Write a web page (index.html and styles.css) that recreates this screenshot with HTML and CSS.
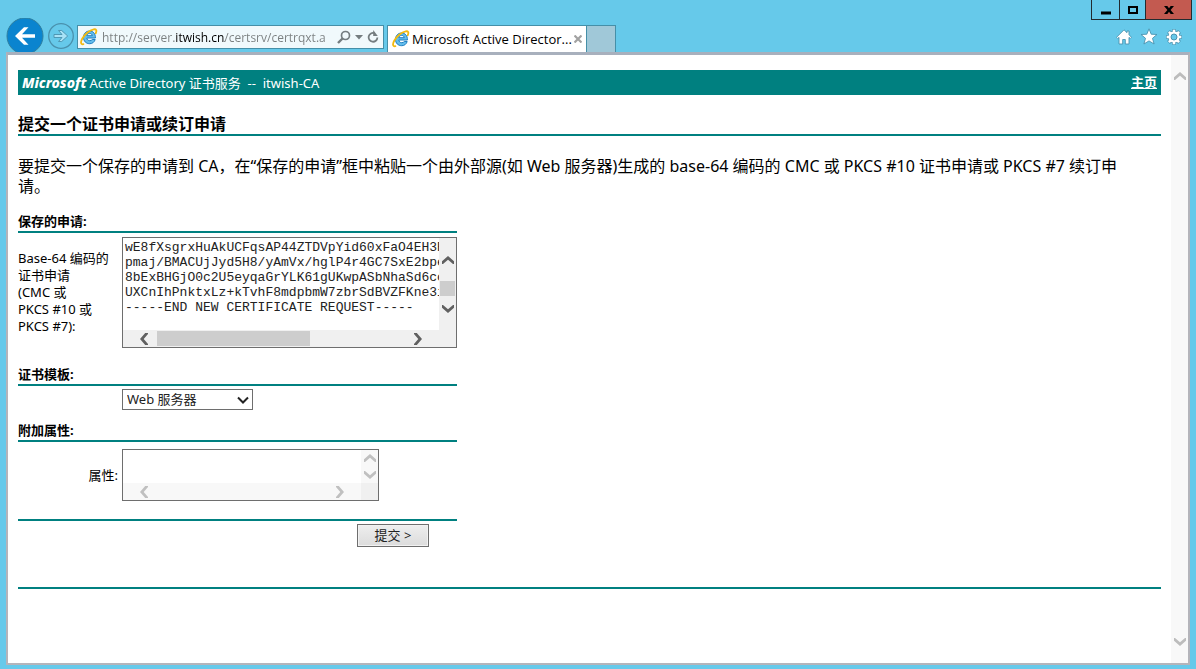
FILE: index.html
```html
<!DOCTYPE html>
<html lang="zh-CN">
<head>
<meta charset="utf-8">
<title>Microsoft Active Directory 证书服务</title>
<link rel="stylesheet" href="styles.css">
</head>
<body>
<svg class="defs" width="0" height="0" aria-hidden="true">
  <symbol id="ie" viewBox="0 0 18 18">
    <path d="M15.400 10H6.800c.2 1.700 1.400 2.700 3 2.700 1.100 0 1.900-.4 2.400-1.200h3c-.8 2.600-2.800 4.200-5.500 4.200-3.700 0-6.200-2.600-6.200-6.300S6 3 9.600 3c3.700 0 6 2.800 5.800 7zM6.800 7.700h5.500c-.2-1.400-1.200-2.300-2.700-2.300-1.500 0-2.500.9-2.800 2.300z" fill="#63bdec" stroke="#1f7fc2" stroke-width="1"/>
    <path d="M3.400 16.200C.6 16.800.4 14 2.200 10.700 4.500 6.500 9.500 2 13.700 1.300c2.700-.4 3.300 1.300 2 4" fill="none" stroke="#f2b90f" stroke-width="1.800" stroke-linecap="round"/>
  </symbol>
  <symbol id="chev" viewBox="0 0 12 8"><path d="M0 8V5.200L6 0l6 5.200V8l-1 0L6 3.700 1 8z" fill="currentColor"/></symbol>
</svg>

<header class="chrome">
  <nav class="nav">
    <button class="back" aria-label="Back"><svg width="38" height="34" viewBox="0 0 38 34"><circle cx="19" cy="18" r="18" fill="#0a84cf" stroke="#2f7f9f"/><path d="M9 18 18 9.300h4.500L16 16.200h13v3.600H16l6.500 6.900H18z" fill="#fff"/></svg></button>
    <button class="forward" aria-label="Forward"><svg width="26" height="26" viewBox="0 0 26 26"><circle cx="13" cy="13" r="12.300" fill="none" stroke="#4a91ad" stroke-width="1.300"/><path d="M6 11.500h8L10.500 7.500h3.200l6 5.500-6 5.500h-3.200l3.500-4H6z" fill="#a8e2f6" stroke="#4a91ad" stroke-width=".9"/></svg></button>
    <div class="address">
      <svg width="18" height="18"><use href="#ie"/></svg>
      <input type="text" aria-label="Address" value="http://server.itwish.cn/certsrv/certrqxt.a">
      <button aria-label="Search"><svg width="14" height="14" viewBox="0 0 14 14"><circle cx="8.500" cy="5.500" r="4" fill="none" stroke="#747d80" stroke-width="1.700"/><path d="M5.500 8.500 1 13" stroke="#747d80" stroke-width="2.400"/></svg></button>
      <button aria-label="History"><svg width="8" height="5"><path d="M0 0h8L4 4.500z" fill="#747d80"/></svg></button>
      <button aria-label="Refresh"><svg width="12" height="14" viewBox="0 0 12 14"><path d="M7.500 3.200A4.400 4.400 0 1 0 10.400 7.500" fill="none" stroke="#747d80" stroke-width="1.800"/><path d="M6.200 0v6h4.600z" fill="#747d80"/></svg></button>
    </div>
  </nav>
  <div class="tabs">
    <div class="tab"><svg width="18" height="18"><use href="#ie"/></svg><span>Microsoft Active Director...</span><button aria-label="Close tab"><svg width="8" height="8"><path d="m.5.5 7 7m0-7-7 7" stroke="#a2a2a2" stroke-width="2.200"/></svg></button></div>
    <button class="newtab" aria-label="New tab"></button>
  </div>
  <div class="right">
    <div class="window-buttons">
      <button class="min" aria-label="Minimize"><svg width="10" height="10"><path d="M0 6.500h10v3H0z"/></svg></button>
      <button class="max" aria-label="Maximize"><svg width="10" height="8"><path d="M0 0h10v8H0zM2 2v4h6V2z" fill-rule="evenodd"/></svg></button>
      <button class="close" aria-label="Close"><svg width="10" height="8"><path d="M0 0h3.300L5 2.300 6.700 0H10L6.600 4 10 8H6.700L5 5.700 3.300 8H0l3.400-4z"/></svg></button>
    </div>
    <div class="tools">
      <button aria-label="Home"><svg width="16" height="16" viewBox="0 0 16 16"><path d="M8 .8.500 8.300l1.200 1.200L3 8.400V15h3.700v-4.500h2.600V15H13V8.400l1.300 1.100 1.200-1.200-2.500-2.600V2h-2v1.700z" fill="#fff" stroke="#4a93b0" stroke-width=".9"/></svg></button>
      <button aria-label="Favorites"><svg width="18" height="17" viewBox="0 0 18 17"><path d="m9 .8 2.200 5.400 5.800.3-4.500 3.800 1.600 5.700L9 12.900 3.900 16l1.600-5.700L1 6.500l5.800-.3z" fill="#fff" stroke="#4a93b0" stroke-width=".9"/></svg></button>
      <button aria-label="Tools"><svg width="16" height="16" viewBox="0 0 16 16"><g stroke="#4a93b0" stroke-width="4"><path d="M8 .2v15.600M.2 8h15.600M2.500 2.500l11 11m0-11-11 11"/></g><circle cx="8" cy="8" r="6" fill="#fff" stroke="#4a93b0"/><path d="M8 .7v14.600M.7 8h14.600M2.900 2.900l10.200 10.200m0-10.200L2.900 13.100" stroke="#fff" stroke-width="2.600"/><circle cx="8" cy="8" r="3" fill="#66c9ea" stroke="#4a93b0"/></svg></button>
    </div>
  </div>
</header>

<div class="frame">
  <main class="page">
    <div class="banner">
      <div><b class="brand">Microsoft</b>Active Directory 证书服务 &nbsp;--&nbsp; itwish-CA</div>
      <a href="#">主页</a>
    </div>
    <h1>提交一个证书申请或续订申请</h1>
    <p class="intro">要提交一个保存的申请到 CA，在“保存的申请”框中粘贴一个由外部源(如 Web 服务器)生成的 base-64 编码的 CMC 或 PKCS #10 证书申请或 PKCS #7 续订申请。</p>

    <form>
      <h2>保存的申请:</h2>
      <div class="row request">
        <label for="req">Base-64 编码的<br>证书申请<br>(CMC 或<br>PKCS #10 或<br>PKCS #7):</label>
        <div class="area">
          <textarea id="req" wrap="off" spellcheck="false">wE8fXsgrxHuAkUCFqsAP44ZTDVpYid60xFaO4EH3R
pmaj/BMACUjJyd5H8/yAmVx/hglP4r4GC7SxE2bpe
8bExBHGjO0c2U5eyqaGrYLK61gUKwpASbNhaSd6co
UXCnIhPnktxLz+kTvhF8mdpbmW7zbrSdBVZFKne3i
-----END NEW CERTIFICATE REQUEST-----
</textarea>
          <div class="vbar"><svg class="up" width="12" height="8"><use href="#chev"/></svg><i class="thumb"></i><svg class="down" width="12" height="8"><use href="#chev"/></svg></div>
          <div class="hbar"><svg class="left" width="12" height="8"><use href="#chev"/></svg><i class="thumb"></i><svg class="end" width="12" height="8"><use href="#chev"/></svg></div>
        </div>
      </div>

      <h2>证书模板:</h2>
      <div class="row template">
        <span></span>
        <div class="select"><select aria-label="证书模板"><option>Web 服务器</option></select><svg width="12" height="8" viewBox="0 0 12 8"><path d="m1 1.500 5 5 5-5" fill="none" stroke="#222" stroke-width="2"/></svg></div>
      </div>

      <h2>附加属性:</h2>
      <div class="row attributes">
        <label for="attr">属性:</label>
        <div class="area small">
          <textarea id="attr" wrap="off"></textarea>
          <div class="vbar"><svg class="up" width="12" height="8"><use href="#chev"/></svg><svg class="down" width="12" height="8"><use href="#chev"/></svg></div>
          <div class="hbar"><svg class="left" width="12" height="8"><use href="#chev"/></svg><svg class="end" width="12" height="8"><use href="#chev"/></svg></div>
        </div>
      </div>
      <div class="submit"><button type="button">提交 &gt;</button></div>
    </form>
    <hr>
  </main>
  <div class="page-scroll"><svg class="up" width="12" height="8"><use href="#chev"/></svg><svg class="down" width="12" height="8"><use href="#chev"/></svg></div>
</div>
</body>
</html>
```
FILE: styles.css
```css
* { box-sizing: border-box; }
body {
  margin: 0;
  height: 100vh;
  padding: 0 6px 4px;
  display: flex;
  flex-direction: column;
  background: #66c9ea;
  color: #000;
  font: 13px/17px "Noto Sans", "Noto Sans CJK SC", sans-serif;
}
button { padding: 0; border: 0; background: none; font: inherit; color: inherit; }
svg { display: block; flex: none; }
.defs { position: absolute; }

.chrome { display: flex; height: 52px; flex: none; font-family: "Open Sans", sans-serif; }
.nav { display: flex; align-items: flex-end; width: 378px; }
.back { height: 34px; }
.forward { margin: 0 3px 3px 4px; }
.address {
  display: flex;
  align-items: center;
  gap: 4px;
  flex: 1;
  min-width: 0;
  height: 24px;
  margin-bottom: 3px;
  padding: 0 4px 0 2px;
  border: 1px solid #458fa8;
  background: #f0f9fc;
}
.address input {
  flex: 1;
  min-width: 0;
  height: 20px;
  padding: 0;
  border: 0;
  outline: 0;
  font: inherit;
  font-size: 12px;
  color: transparent;
  background: linear-gradient(90deg, #7a7f80 73px, #000 73px, #000 123px, #7a7f80 123px);
  background-clip: text;
}
.tabs { display: flex; align-items: flex-end; margin-left: 3px; }
.tab {
  display: flex;
  align-items: center;
  gap: 2px;
  width: 200px;
  height: 27px;
  padding: 0 5px 0 4px;
  border: 1px solid #458fa8;
  border-bottom: 0;
  background: #fff;
}
.tab span { flex: 1; white-space: nowrap; }
.newtab { width: 29px; height: 27px; border: 1px solid #458fa8; border-width: 1px 1px 0 0; background: #a0c8d8; }
.right { display: flex; flex-direction: column; align-items: flex-end; margin-left: auto; }
.window-buttons { display: flex; height: 20px; margin-right: -2px; border: 1px solid #222b30; border-top: 0; }
.window-buttons button { display: flex; align-items: center; justify-content: center; width: 27px; }
.window-buttons .max { width: 27px; border: solid #222b30; border-width: 0 1px; }
.window-buttons .close { width: 45px; background: #c35a50; }
.tools { display: flex; align-items: center; gap: 8px; padding: 8px 8px 0 0; }

.frame { display: flex; flex: 1; min-height: 0; border: 2px solid #b4b4ba; border-top: 3px solid #a8b0bd; background: #fff; }
.page { flex: 1; min-width: 0; padding: 15px 10px; overflow: hidden; }
.page-scroll { display: flex; flex-direction: column; justify-content: space-between; align-items: center; width: 17px; padding: 17px 0; background: #f8f8f8; color: #bcbcbc; }
.down { transform: rotate(180deg); }
.left { transform: rotate(-90deg); }
.end { transform: rotate(90deg); }

.banner { display: flex; justify-content: space-between; align-items: center; height: 25px; padding: 0 4px; background: #008080; color: #fff; }
.brand { margin-right: 3px; font-size: 14px; font-style: italic; font-weight: 800; }
.banner a { color: #fff; font-weight: 700; }
h1 { margin: 20px 0; padding-bottom: 0; border-bottom: 2px solid #008080; font-size: 16px; line-height: 19px; }
.intro { margin: 0 0 16px; padding-right: 16px; font-size: 16px; line-height: 20px; }
form { width: 439px; max-width: 100%; }
h2 { margin: 0; border-bottom: 2px solid #008080; font-size: 13px; line-height: 19px; }
.row { display: grid; grid-template-columns: 100px 1fr; column-gap: 4px; align-items: center; }
.request { padding: 4px 0 17px; }
.area {
  display: grid;
  grid-template-columns: 1fr 17px;
  grid-template-rows: 1fr 17px;
  height: 111px;
  border: 1px solid #6e6e6e;
  background: #f0f0f0;
  color: #606060;
}
.area textarea {
  min-width: 0;
  width: 100%;
  height: 100%;
  padding: 2px;
  border: 0;
  outline: 0;
  resize: none;
  overflow: hidden;
  background: #fff;
  color: #222;
  font: 13px/15px "Liberation Mono", monospace;
}
.vbar { display: flex; flex-direction: column; align-items: center; padding: 18px 0 17px; }
.vbar .down { margin-top: auto; }
.vbar .thumb { width: 15px; height: 15px; margin-top: 17px; background: #cdcdcd; }
.hbar { display: flex; align-items: center; padding: 0 15px; }
.hbar .thumb { width: 153px; height: 15px; margin-left: 7px; background: #cdcdcd; }
.hbar .end { margin-left: auto; }
.template { padding: 3px 0 11px; }
.select { display: flex; align-items: center; width: 131px; height: 21px; padding-right: 3px; border: 1px solid #6e6e6e; }
.select select { flex: 1; min-width: 0; height: 19px; padding: 0 0 0 4px; border: 0; appearance: none; background: #fff; color: #222; font: inherit; }
.attributes { padding: 7px 0 18px; }
.attributes label { text-align: right; }
.small { width: 257px; height: 52px; color: #c0c0c0; }
.small .vbar { padding: 4px 0; background: #f8f8f8; }
.small .hbar { background: #f8f8f8; }
.submit { display: flex; justify-content: flex-end; padding: 3px 28px 0 0; border-top: 2px solid #008080; }
.submit button { width: 72px; height: 23px; border: 1px solid #6e6e6e; background: linear-gradient(#eee, #dcdcdc); color: #222; box-shadow: inset 0 0 0 1px #f2f2f2; }
hr { height: 2px; margin: 40px 0 0; border: 0; background: #008080; }
```
